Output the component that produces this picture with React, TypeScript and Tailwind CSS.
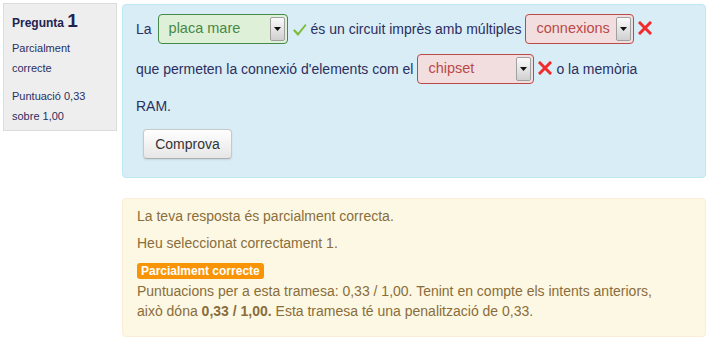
import React from "react";

const font = { fontFamily: '"Liberation Sans", Arial, sans-serif' };

function Arrow() {
  return (
    <span className="absolute right-[2px] top-[2px] bottom-[2px] w-[15px] flex items-center justify-center border border-[#a0a0a0] rounded-[2px] bg-gradient-to-b from-[#fafafa] to-[#d0d0d0]">
      <svg width="7" height="4" viewBox="0 0 7 4">
        <polygon points="0,0 7,0 3.5,4" fill="#111" />
      </svg>
    </span>
  );
}

function Select({ label, width, ok }: { label: string; width: number; ok: boolean }) {
  const cls = ok
    ? "bg-[#dff0d8] border-[#468847] text-[#468847]"
    : "bg-[#f2dede] border-[#b94a48] text-[#b94a48]";
  return (
    <span
      className={`relative inline-flex items-center h-[30px] border rounded-[4px] pl-[10px] text-[14.5px] ${cls}`}
      style={{ width }}
    >
      {label}
      <Arrow />
    </span>
  );
}

function Check() {
  return (
    <svg width="15" height="14" viewBox="0 0 15 14" className="mt-[2px]">
      <path d="M1 7.5 L2.8 6.2 L6 9.8 L13.2 1 L14.5 2.2 L6 13 Z" fill="#7cbb37" />
    </svg>
  );
}

function Cross() {
  return (
    <svg width="14" height="14" viewBox="0 0 14 14" className="mt-[-2px]">
      <path d="M2 2 L12 12 M12 2 L2 12" stroke="#f02b2b" strokeWidth="3" strokeLinecap="square" />
    </svg>
  );
}

export default function App() {
  return (
    <div className="w-[712px] h-[343px] bg-white flex pt-[3px] pl-[3px] pr-[6px] text-[14px] text-[#2c2f5e]" style={font}>
      <div className="w-[114px] h-[128px] shrink-0 bg-[#eeeeee] border border-[#dcdcdc] pl-[8px] pt-[7px] text-[11px] leading-[20px] text-[#2a2f62]">
        <div className="font-bold text-[12px] text-[#1f2350] leading-[20px]">
          Pregunta <span className="text-[19px]">1</span>
        </div>
        <div className="mt-[5px]">Parcialment<br />correcte</div>
        <div className="mt-[8px]">Puntuació 0,33<br />sobre 1,00</div>
      </div>
      <div className="ml-[5px] flex-1 flex flex-col">
        <div className="mt-[1px] h-[174px] bg-[#d9edf7] border border-[#bce8f1] rounded-[4px] pl-[13px] pt-[9px]">
          <div className="flex items-center h-[30px] gap-[4px]">
            <span className="mr-[2px]">La</span>
            <Select label="placa mare" width={130} ok />
            <Check />
            <span>és un circuit imprès amb múltiples</span>
            <Select label="connexions" width={109} ok={false} />
            <Cross />
          </div>
          <div className="flex items-center h-[30px] gap-[4px] mt-[10px]">
            <span>que permeten la connexió d'elements com el</span>
            <Select label="chipset" width={117} ok={false} />
            <Cross />
            <span>o la memòria</span>
          </div>
          <div className="h-[20px] leading-[20px] mt-[12px]">RAM.</div>
          <button className="mt-[13px] ml-[7px] h-[30px] w-[89px] rounded-[4px] border border-[#c8c8c8] border-b-[#b0b0b0] bg-gradient-to-b from-white to-[#e6e6e6] text-[#333] text-[14px] shadow-[0_1px_2px_rgba(0,0,0,0.1)]" style={font}>
            Comprova
          </button>
        </div>
        <div className="mt-[20px] h-[139px] bg-[#fcf8e3] border border-[#fbeed5] rounded-[4px] pl-[14px] pt-[7px] text-[#8a6d3b] leading-[20px]">
          <div>La teva resposta és parcialment correcta.</div>
          <div className="mt-[7px]">Heu seleccionat correctament 1.</div>
          <div className="mt-[8px] h-[20px] flex items-center">
            <span className="inline-flex items-center h-[16px] px-[4px] rounded-[3px] bg-[#f89406] text-white font-bold text-[12px]">
              Parcialment correcte
            </span>
          </div>
          <div>
            Puntuacions per a esta tramesa: 0,33 / 1,00. Tenint en compte els intents anteriors,
            <br />
            això dóna <b>0,33 / 1,00.</b> Esta tramesa té una penalització de 0,33.
          </div>
        </div>
      </div>
    </div>
  );
}
